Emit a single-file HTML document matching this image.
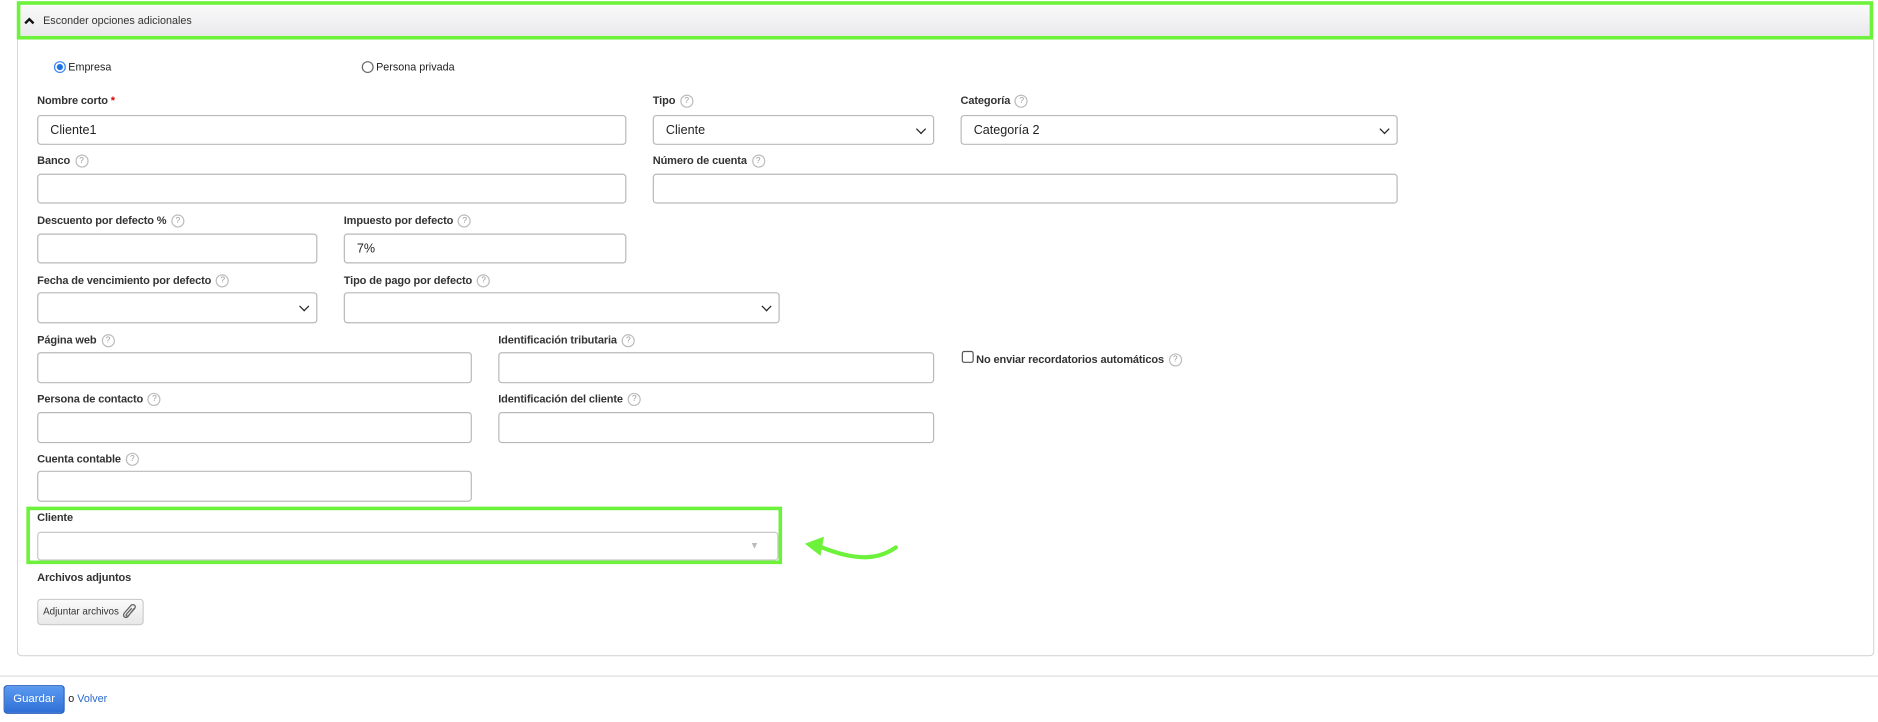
<!DOCTYPE html>
<html><head><meta charset="utf-8"><style>
html,body{margin:0;padding:0;background:#fff;width:1878px;height:722px;overflow:hidden}
#w{position:absolute;left:0;top:0;width:1568px;height:603px;transform:scale(1.19770);transform-origin:0 0;font-family:"Liberation Sans",Arial,sans-serif;color:#222}
.a{position:absolute}
.lbl{position:absolute;font-size:9.2px;font-weight:bold;color:#333;white-space:nowrap;letter-spacing:-0.1px}
.q{display:inline-block;width:9px;height:9px;border:1px solid #bbb;border-radius:50%;font-size:7px;line-height:9px;text-align:center;color:#999;font-weight:normal;margin-left:4px;vertical-align:middle}
.in{position:absolute;border:1px solid #b9b9b9;border-radius:3px;background:#fff;box-sizing:border-box;font-size:10.5px;padding-left:10px;display:flex;align-items:center;color:#222}
.sel::after{content:"";position:absolute;right:7px;top:50%;width:5px;height:5px;border-right:1.6px solid #222;border-bottom:1.6px solid #222;transform:translateY(-70%) rotate(45deg)}
</style></head><body><div id="w">
<div class="a" style="left:14px;top:33px;width:1551px;height:515px;border:1px solid #d6d6d6;border-top:none;border-radius:0 0 4px 4px;box-sizing:border-box"></div>
<div class="a" style="left:14px;top:1px;width:1550px;height:32px;border:3px solid #6cf23a;box-sizing:border-box;background:linear-gradient(#fafafa,#e9e9ec)"></div>
<svg class="a" style="left:20px;top:14px" width="9" height="7" viewBox="0 0 9 7"><path d="M1 5.5L4.5 2L8 5.5" stroke="#111" stroke-width="2" fill="none"/></svg>
<div class="a" style="left:36px;top:12px;font-size:9px;color:#333">Esconder opciones adicionales</div>

<div class="a" style="left:45px;top:51px;width:8px;height:8px;border-radius:50%;border:1px solid #3b82f6;background:radial-gradient(#1a73e8 40%,#fff 50%)"></div>
<div class="a" style="left:57px;top:51px;font-size:9px">Empresa</div>
<div class="a" style="left:302px;top:51px;width:8px;height:8px;border-radius:50%;border:1px solid #666"></div>
<div class="a" style="left:314px;top:51px;font-size:9px">Persona privada</div>

<div class="lbl" style="left:31px;top:79px">Nombre corto <span style="color:#d00">*</span></div>
<div class="in" style="left:31px;top:96px;width:492px;height:25px">Cliente1</div>
<div class="lbl" style="left:545px;top:79px">Tipo<span class="q">?</span></div>
<div class="in sel" style="left:545px;top:96px;width:235px;height:25px">Cliente</div>
<div class="lbl" style="left:802px;top:79px">Categoría<span class="q">?</span></div>
<div class="in sel" style="left:802px;top:96px;width:365px;height:25px">Categoría 2</div>

<div class="lbl" style="left:31px;top:129px">Banco<span class="q">?</span></div>
<div class="in" style="left:31px;top:145px;width:492px;height:25px"></div>
<div class="lbl" style="left:545px;top:129px">Número de cuenta<span class="q">?</span></div>
<div class="in" style="left:545px;top:145px;width:622px;height:25px"></div>

<div class="lbl" style="left:31px;top:179px">Descuento por defecto %<span class="q">?</span></div>
<div class="in" style="left:31px;top:195px;width:234px;height:25px"></div>
<div class="lbl" style="left:287px;top:179px">Impuesto por defecto<span class="q">?</span></div>
<div class="in" style="left:287px;top:195px;width:236px;height:25px">7%</div>

<div class="lbl" style="left:31px;top:229px">Fecha de vencimiento por defecto<span class="q">?</span></div>
<div class="in sel" style="left:31px;top:244px;width:234px;height:26px"></div>
<div class="lbl" style="left:287px;top:229px">Tipo de pago por defecto<span class="q">?</span></div>
<div class="in sel" style="left:287px;top:244px;width:364px;height:26px"></div>

<div class="lbl" style="left:31px;top:279px">Página web<span class="q">?</span></div>
<div class="in" style="left:31px;top:294px;width:363px;height:26px"></div>
<div class="lbl" style="left:416px;top:279px">Identificación tributaria<span class="q">?</span></div>
<div class="in" style="left:416px;top:294px;width:364px;height:26px"></div>
<div class="a" style="left:803px;top:293px;width:8px;height:8px;border:1px solid #555;border-radius:2px"></div>
<div class="lbl" style="left:815px;top:295px">No enviar recordatorios automáticos<span class="q">?</span></div>

<div class="lbl" style="left:31px;top:328px">Persona de contacto<span class="q">?</span></div>
<div class="in" style="left:31px;top:344px;width:363px;height:26px"></div>
<div class="lbl" style="left:416px;top:328px">Identificación del cliente<span class="q">?</span></div>
<div class="in" style="left:416px;top:344px;width:364px;height:26px"></div>

<div class="lbl" style="left:31px;top:378px">Cuenta contable<span class="q">?</span></div>
<div class="in" style="left:31px;top:393px;width:363px;height:26px"></div>

<div class="a" style="left:22px;top:423px;width:631px;height:48px;border:3px solid #6cf23a;box-sizing:border-box"></div>
<div class="lbl" style="left:31px;top:427px">Cliente</div>
<div class="in" style="left:31px;top:444px;width:619px;height:24px;border-color:#c8c8c8"></div>
<div class="a" style="left:626px;top:451px;font-size:8px;color:#bbb">▼</div>
<svg class="a" style="left:668px;top:445px" width="84" height="26" viewBox="0 0 84 26"><path d="M80 12C66 22 48 24 18 12" stroke="#6cf23a" stroke-width="3.5" fill="none" stroke-linecap="round"/><path d="M4 9L20 3L17 19Z" fill="#6cf23a"/></svg>

<div class="lbl" style="left:31px;top:477px">Archivos adjuntos</div>
<div class="a" style="left:31px;top:500px;width:89px;height:22px;border:1px solid #ccc;border-radius:3px;background:linear-gradient(#fafafa,#e8e8e8);box-sizing:border-box;font-size:8.2px;padding:5px 0 0 4px;color:#333;white-space:nowrap">Adjuntar archivos</div>
<svg class="a" style="left:102px;top:504px" width="13" height="14" viewBox="0 0 13 14"><path d="M10 4L5 10.5C4 11.8 2.3 11.8 1.6 10.8C0.9 9.8 1.2 8.6 2 7.6L7.3 1.6C8.2 0.6 9.7 0.7 10.4 1.4C11.1 2.2 11 3.4 10.2 4.3L5.2 10C4.7 10.6 4 10.6 3.6 10.2C3.2 9.8 3.3 9.2 3.8 8.6L8 3.8" stroke="#666" stroke-width="1.1" fill="none"/></svg>

<div class="a" style="left:0;top:564px;width:1568px;height:1px;background:#ddd"></div>
<div class="a" style="left:3px;top:572px;width:51px;height:24px;border-radius:3px;background:linear-gradient(#5b9af0,#2f6fd6);border:1px solid #2a62c0;box-sizing:border-box;color:#fff;font-size:9.5px;text-align:center;line-height:22px">Guardar</div>
<div class="a" style="left:57px;top:578px;font-size:9px">o <span style="color:#2a6ac8">Volver</span></div>
</div></body></html>
